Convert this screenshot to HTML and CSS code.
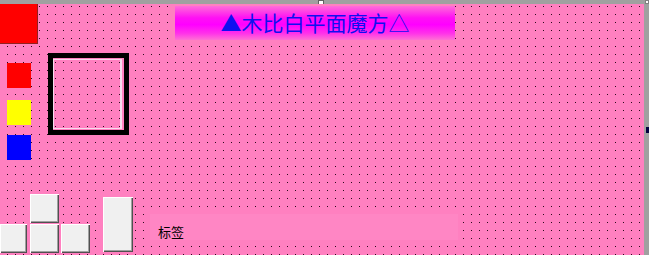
FILE: index.html
```html
<!DOCTYPE html>
<html lang="zh">
<head>
<meta charset="utf-8">
<title>木比白平面魔方</title>
<link rel="stylesheet" href="styles.css">
</head>
<body>
<div class="topbar">
  <span class="handle handle-top"></span>
  <span class="handle handle-corner"></span>
</div>
<div class="workspace">
  <div class="form">
    <div class="ctl big-red"></div>
    <div class="ctl title">▲木比白平面魔方△</div>
    <div class="ctl swatch swatch-red"></div>
    <div class="ctl swatch swatch-yellow"></div>
    <div class="ctl swatch swatch-blue"></div>
    <div class="ctl frame"><div class="frame-inner"></div></div>
    <div class="ctl btn btn-top"></div>
    <div class="ctl btn btn-left"></div>
    <div class="ctl btn btn-mid"></div>
    <div class="ctl btn btn-right"></div>
    <div class="ctl btn btn-tall"></div>
    <div class="ctl label">标签</div>
  </div>
  <div class="rightbar">
    <span class="handle handle-side"></span>
  </div>
</div>
</body>
</html>
```
FILE: styles.css
```css
html, body {
  margin: 0;
  padding: 0;
  width: 649px;
  height: 255px;
  overflow: hidden;
  background: #a0a0a0;
  font-family: "Noto Sans CJK SC", "Noto Sans", sans-serif;
}

.topbar {
  position: relative;
  height: 4px;
  background: #a0a0a0;
}

.workspace {
  display: flex;
  height: 251px;
}

.form {
  position: relative;
  flex: 1;
  background-color: #ff80c0;
  background-image: conic-gradient(at 1px 1px, transparent 75%, #2a0a1a 0);
  background-size: 8px 8px;
  background-position: 7px 2px;
  overflow: hidden;
}

.rightbar {
  position: relative;
  width: 5px;
  background: #a0a0a0;
}

.handle {
  position: absolute;
  box-sizing: border-box;
}

.handle-top {
  left: 318px;
  top: 0;
  width: 6px;
  height: 5px;
  background: #fff;
  border: 1px solid #606060;
}

.handle-corner {
  right: 0;
  top: 0;
  width: 4px;
  height: 4px;
  background: #fff;
  border: 1px solid #808080;
}

.handle-side {
  right: 0;
  top: 123px;
  width: 3px;
  height: 6px;
  background: #000040;
}

.ctl {
  position: absolute;
  box-sizing: border-box;
}

.big-red {
  left: 0;
  top: 0;
  width: 38px;
  height: 40px;
  background: #ff0000;
  border-right: 1px solid #902020;
  border-bottom: 1px solid #902020;
}

.title {
  left: 175px;
  top: 2px;
  width: 280px;
  height: 34px;
  display: flex;
  align-items: center;
  justify-content: center;
  background: linear-gradient(#ff6cd8 0%, #ff10f4 35%, #ff00ff 55%, #ff30ea 80%, #ff70d4 100%);
  color: #1010f0;
  font-size: 21px;
  line-height: 1;
  padding-bottom: 2px;
}

.swatch {
  left: 7px;
  width: 24px;
  height: 25px;
}

.swatch-red { top: 59px; background: #ff0000; }
.swatch-yellow { top: 96px; background: #ffff00; }
.swatch-blue { top: 131px; background: #0000ff; }

.frame {
  left: 48px;
  top: 49px;
  width: 81px;
  height: 82px;
  border: 5px solid #000;
  padding: 1px 2px 1px 0;
}

.frame-inner {
  box-sizing: border-box;
  width: 100%;
  height: 100%;
  border: 1px solid #f6dcee;
  border-right-width: 2px;
}

.btn {
  background: #f0f0f0;
  box-shadow: inset 1px 1px 0 #ffffff, inset -1px -1px 0 #505050, inset -2px -2px 0 #a0a0a0;
}

.btn-top { left: 30px; top: 190px; width: 29px; height: 29px; }
.btn-left { left: 0; top: 220px; width: 27px; height: 29px; }
.btn-mid { left: 30px; top: 220px; width: 29px; height: 29px; }
.btn-right { left: 61px; top: 220px; width: 29px; height: 29px; }
.btn-tall { left: 103px; top: 193px; width: 30px; height: 55px; }

.label {
  left: 150px;
  top: 210px;
  width: 308px;
  height: 26px;
  background: #ff86c4;
  color: #000;
  font-size: 13px;
  line-height: 13px;
  padding: 11px 0 0 8px;
}
```
